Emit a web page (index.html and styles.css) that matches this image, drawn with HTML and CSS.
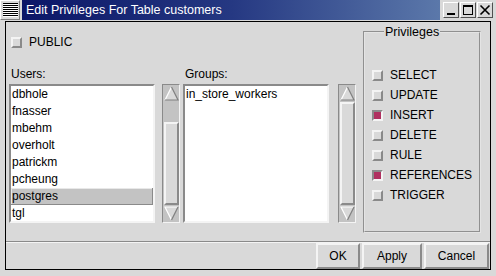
FILE: index.html
```html
<!DOCTYPE html>
<html lang="en">
<head>
    <meta charset="UTF-8">
    <title>Edit Privileges For Table customers</title>
    <link rel="stylesheet" href="styles.css">
</head>
<body>
    <div class="window">
        <div class="titlebar">
            <div class="menu-btn"><div class="stripes"></div></div>
            <div class="title">Edit Privileges For Table customers</div>
            <div class="wm-buttons">
                <span class="wm-btn">
                    <svg width="12" height="12" viewBox="0 0 12 12"><rect x="2" y="9" width="8" height="2" fill="#000"/></svg>
                </span>
                <span class="wm-btn">
                    <svg width="12" height="12" viewBox="0 0 12 12"><rect x="1.5" y="1.5" width="9" height="9" fill="none" stroke="#000"/><rect x="1" y="1" width="10" height="2" fill="#000"/></svg>
                </span>
                <span class="wm-btn">
                    <svg width="12" height="12" viewBox="0 0 12 12"><path d="M1.5 1.5 L10.5 10.5 M10.5 1.5 L1.5 10.5" stroke="#000" stroke-width="1.6"/></svg>
                </span>
            </div>
        </div>

        <div class="client">
            <div class="main">
                <div class="left">
                    <label class="check public"><span class="box"></span>PUBLIC</label>

                    <div class="lists">
                        <div class="column users">
                            <div class="col-label">Users:</div>
                            <div class="list-row">
                                <ul class="listbox">
                                    <li>dbhole</li>
                                    <li>fnasser</li>
                                    <li>mbehm</li>
                                    <li>overholt</li>
                                    <li>patrickm</li>
                                    <li>pcheung</li>
                                    <li class="selected">postgres</li>
                                    <li>tgl</li>
                                </ul>
                                <div class="scrollbar">
                                    <svg class="arrow" width="15" height="15" viewBox="0 0 15 15">
                                        <polygon points="7.5,1 14,14 1,14" fill="#d9d9d9"/>
                                        <path d="M1 14 L7.5 1" stroke="#fff" stroke-width="1.2" fill="none"/>
                                        <path d="M7.5 1 L14 14 L1 14" stroke="#808080" stroke-width="1.2" fill="none"/>
                                    </svg>
                                    <div class="trough-gap"></div>
                                    <div class="slider"></div>
                                    <svg class="arrow" width="15" height="15" viewBox="0 0 15 15">
                                        <polygon points="1,1 14,1 7.5,14" fill="#d9d9d9"/>
                                        <path d="M7.5 14 L1 1 L14 1" stroke="#fff" stroke-width="1.2" fill="none"/>
                                        <path d="M14 1 L7.5 14" stroke="#808080" stroke-width="1.2" fill="none"/>
                                    </svg>
                                </div>
                            </div>
                        </div>

                        <div class="column groups">
                            <div class="col-label">Groups:</div>
                            <div class="list-row">
                                <ul class="listbox">
                                    <li>in_store_workers</li>
                                </ul>
                                <div class="scrollbar">
                                    <svg class="arrow" width="15" height="15" viewBox="0 0 15 15">
                                        <polygon points="7.5,1 14,14 1,14" fill="#d9d9d9"/>
                                        <path d="M1 14 L7.5 1" stroke="#fff" stroke-width="1.2" fill="none"/>
                                        <path d="M7.5 1 L14 14 L1 14" stroke="#808080" stroke-width="1.2" fill="none"/>
                                    </svg>
                                    <div class="slider"></div>
                                    <svg class="arrow" width="15" height="15" viewBox="0 0 15 15">
                                        <polygon points="1,1 14,1 7.5,14" fill="#d9d9d9"/>
                                        <path d="M7.5 14 L1 1 L14 1" stroke="#fff" stroke-width="1.2" fill="none"/>
                                        <path d="M14 1 L7.5 14" stroke="#808080" stroke-width="1.2" fill="none"/>
                                    </svg>
                                </div>
                            </div>
                        </div>
                    </div>
                </div>

                <fieldset class="privileges">
                    <legend>Privileges</legend>
                    <div class="priv-list">
                        <label class="check"><span class="box"></span>SELECT</label>
                        <label class="check"><span class="box"></span>UPDATE</label>
                        <label class="check"><span class="box on"></span>INSERT</label>
                        <label class="check"><span class="box"></span>DELETE</label>
                        <label class="check"><span class="box"></span>RULE</label>
                        <label class="check"><span class="box on"></span>REFERENCES</label>
                        <label class="check"><span class="box"></span>TRIGGER</label>
                    </div>
                </fieldset>
            </div>

            <div class="separator"></div>

            <div class="buttons">
                <button class="btn ok" type="button">OK</button>
                <button class="btn apply" type="button">Apply</button>
                <button class="btn cancel" type="button">Cancel</button>
            </div>
        </div>
    </div>
</body>
</html>
```

FILE: styles.css
```css
body {
    margin: 0;
    padding: 0;
    font-family: "Liberation Sans", Arial, sans-serif;
    font-size: 12px;
    color: #000;
    background-color: #d9d9d9;
}

.window {
    width: 496px;
    height: 276px;
    display: flex;
    flex-direction: column;
    background-color: #d9d9d9;
    overflow: hidden;
}

/* title bar */
.titlebar {
    display: flex;
    height: 20px;
    flex-shrink: 0;
}

.menu-btn {
    width: 20px;
    height: 20px;
    box-sizing: border-box;
    padding: 2px 1px 2px 2px;
    border: 1px solid;
    border-color: #ffffff #808080 #808080 #ffffff;
    background-color: #d9d9d9;
}

.stripes {
    height: 100%;
    background: repeating-linear-gradient(#000 0 1px, #fff 1px 2px);
}

.title {
    flex: 1;
    margin-left: 2px;
    padding-left: 4px;
    color: #ffffff;
    font-size: 12.5px;
    line-height: 20px;
    background: linear-gradient(to right, #0b1667, #253882 50%, #5b78aa);
}

.wm-buttons {
    display: flex;
    gap: 1px;
    padding: 2px 3px 0 3px;
}

.wm-btn {
    width: 16px;
    height: 16px;
    box-sizing: border-box;
    border: 1px solid;
    border-color: #ffffff #505050 #505050 #ffffff;
    display: flex;
    align-items: center;
    justify-content: center;
}

/* client area */
.client {
    flex: 1;
    margin: 1px 5px 6px 5px;
    border: 1px solid #000;
    display: flex;
    flex-direction: column;
}

.main {
    display: flex;
    height: 219px;
    padding-left: 3px;
}

.left {
    width: 345px;
    padding-top: 13px;
}

.check {
    display: flex;
    align-items: center;
    gap: 7px;
    height: 14px;
    line-height: 14px;
}

.public {
    margin-left: 2px;
}

.box {
    width: 11px;
    height: 11px;
    box-sizing: border-box;
    border: 2px solid;
    border-color: #f4f4f4 #8a8a8a #8a8a8a #f4f4f4;
    background-color: #d9d9d9;
}

.box.on {
    border-color: #8a8a8a #f4f4f4 #f4f4f4 #8a8a8a;
    background-color: #b03060;
}

.lists {
    display: flex;
    gap: 3px;
    margin-top: 18px;
}

.col-label {
    height: 17px;
    line-height: 14px;
    padding-left: 2px;
}

.list-row {
    display: flex;
}

.users .list-row {
    gap: 7px;
}

.groups .list-row {
    gap: 9px;
}

.listbox {
    width: 146px;
    height: 139px;
    box-sizing: border-box;
    margin: 0;
    padding: 0;
    list-style: none;
    border: 2px solid;
    border-color: #8a8a8a #f4f4f4 #f4f4f4 #8a8a8a;
    background-color: #ffffff;
    overflow: hidden;
}

.listbox li {
    height: 17px;
    line-height: 17px;
    padding-left: 1px;
}

.listbox li.selected {
    background-color: #c3c3c3;
    box-shadow: inset -1px -1px 0 #8a8a8a, inset 1px 1px 0 #e8e8e8;
}

.scrollbar {
    width: 18px;
    height: 139px;
    box-sizing: border-box;
    padding: 1px;
    border: 1px solid;
    border-color: #8a8a8a #f4f4f4 #f4f4f4 #8a8a8a;
    background-color: #c3c3c3;
    display: flex;
    flex-direction: column;
    align-items: center;
}

.arrow {
    display: block;
    flex-shrink: 0;
}

.trough-gap {
    height: 20px;
    flex-shrink: 0;
}

.slider {
    flex: 1;
    width: 15px;
    margin: 1px 0;
    box-sizing: border-box;
    border: 2px solid;
    border-color: #f4f4f4 #8a8a8a #8a8a8a #f4f4f4;
    background-color: #d9d9d9;
}

/* privileges frame */
.privileges {
    width: 118px;
    height: 208px;
    box-sizing: border-box;
    margin: 3px 0 0 9px;
    padding: 0 0 0 7px;
    border: 2px groove #e4e4e4;
    min-width: 0;
}

.privileges legend {
    margin-left: 12px;
    padding: 0 1px;
    font-size: 12.5px;
    line-height: 14px;
}

.priv-list {
    display: flex;
    flex-direction: column;
    gap: 6px;
    padding-top: 29px;
}

.separator {
    margin-top: 0;
    border-top: 1px solid #8a8a8a;
    border-bottom: 1px solid #f4f4f4;
}

.buttons {
    display: flex;
    justify-content: flex-end;
    gap: 2px;
    padding-right: 1px;
}

.btn {
    height: 26px;
    box-sizing: border-box;
    padding: 0;
    font-family: "Liberation Sans", Arial, sans-serif;
    font-size: 12px;
    color: #000;
    background-color: #d9d9d9;
    border: 2px solid;
    border-color: #f4f4f4 #8a8a8a #8a8a8a #f4f4f4;
    cursor: pointer;
}

.btn.ok {
    width: 44px;
}

.btn.apply {
    width: 60px;
}

.btn.cancel {
    width: 65px;
}
```
